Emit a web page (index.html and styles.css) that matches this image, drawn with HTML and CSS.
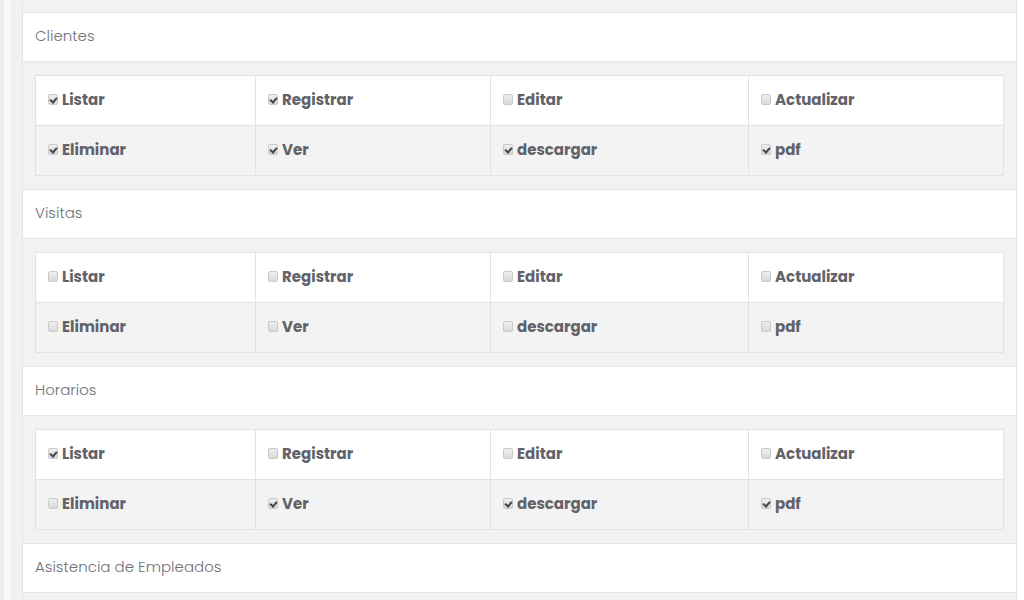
FILE: index.html
```html
<!DOCTYPE html>
<html lang="es">
<head>
<meta charset="utf-8">
<title>Permisos</title>
<link rel="stylesheet" href="styles.css">
</head>
<body>
<div class="layout">
  <div class="gutter"></div>
  <div class="panel">
    <div class="tail"></div>

    <section class="perm">
      <div class="perm-head">Clientes</div>
      <div class="perm-body">
        <div class="grid">
          <div class="cell"><span class="cb on"></span>Listar</div>
          <div class="cell"><span class="cb on"></span>Registrar</div>
          <div class="cell"><span class="cb"></span>Editar</div>
          <div class="cell"><span class="cb"></span>Actualizar</div>
          <div class="cell alt"><span class="cb on"></span>Eliminar</div>
          <div class="cell alt"><span class="cb on"></span>Ver</div>
          <div class="cell alt"><span class="cb on"></span>descargar</div>
          <div class="cell alt"><span class="cb on"></span>pdf</div>
        </div>
      </div>
    </section>

    <section class="perm">
      <div class="perm-head">Visitas</div>
      <div class="perm-body">
        <div class="grid">
          <div class="cell"><span class="cb"></span>Listar</div>
          <div class="cell"><span class="cb"></span>Registrar</div>
          <div class="cell"><span class="cb"></span>Editar</div>
          <div class="cell"><span class="cb"></span>Actualizar</div>
          <div class="cell alt"><span class="cb"></span>Eliminar</div>
          <div class="cell alt"><span class="cb"></span>Ver</div>
          <div class="cell alt"><span class="cb"></span>descargar</div>
          <div class="cell alt"><span class="cb"></span>pdf</div>
        </div>
      </div>
    </section>

    <section class="perm">
      <div class="perm-head">Horarios</div>
      <div class="perm-body">
        <div class="grid">
          <div class="cell"><span class="cb on"></span>Listar</div>
          <div class="cell"><span class="cb"></span>Registrar</div>
          <div class="cell"><span class="cb"></span>Editar</div>
          <div class="cell"><span class="cb"></span>Actualizar</div>
          <div class="cell alt"><span class="cb"></span>Eliminar</div>
          <div class="cell alt"><span class="cb on"></span>Ver</div>
          <div class="cell alt"><span class="cb on"></span>descargar</div>
          <div class="cell alt"><span class="cb on"></span>pdf</div>
        </div>
      </div>
    </section>

    <section class="perm">
      <div class="perm-head">Asistencia de Empleados</div>
      <div class="perm-body"></div>
    </section>
  </div>
</div>
</body>
</html>
```

FILE: styles.css
```css
html, body {
  margin: 0;
  padding: 0;
  height: 600px;
  overflow: hidden;
  background: #ffffff;
}

.layout {
  display: flex;
  height: 600px;
  overflow: hidden;
}

.gutter {
  width: 22px;
  flex: none;
  background: linear-gradient(to right, #eeeeee 0, #eeeeee 3px, #fafafa 5px, #fafafa 9px, #f1f1f1 12px, #f1f1f1 22px);
}

.panel {
  width: 993px;
  flex: none;
  border-left: 1px solid #e3e5e8;
  border-right: 1px solid #e3e5e8;
  background: #f2f2f2;
  font-family: "Poppins", "Open Sans", "DejaVu Sans", sans-serif;
}

.tail {
  height: 12px;
  background: #f2f2f2;
}

.perm-head {
  box-sizing: border-box;
  height: 50px;
  border-top: 1px solid #e3e5e8;
  border-bottom: 1px solid #e3e5e8;
  background: #ffffff;
  display: flex;
  align-items: center;
  padding: 0 0 3px 12px;
  font-size: 15px;
  font-weight: 300;
  color: #707178;
}

.perm-body {
  padding: 13px 12px;
  background: #f2f2f2;
}

.grid {
  display: grid;
  grid-template-columns: 220px 235px 258px 1fr;
  border-top: 1px solid #e1e3e7;
  border-left: 1px solid #e1e3e7;
}

.cell {
  box-sizing: border-box;
  height: 50px;
  border-right: 1px solid #e1e3e7;
  border-bottom: 1px solid #e1e3e7;
  background: #ffffff;
  display: flex;
  align-items: center;
  padding: 0 0 2px 12px;
  font-size: 15px;
  font-weight: 700;
  color: #626268;
}

.cell.alt {
  background: #f3f3f3;
}

.cb {
  box-sizing: border-box;
  width: 10px;
  height: 11px;
  margin-right: 4px;
  border: 1px solid #cacaca;
  border-radius: 2px;
  background: linear-gradient(#efefef, #d9d9d9);
  flex: none;
  position: relative;
}

.cb.on::after {
  content: "";
  position: absolute;
  left: 2px;
  top: 1px;
  width: 3px;
  height: 5px;
  border-right: 2px solid #444;
  border-bottom: 2px solid #444;
  transform: rotate(40deg);
}
```
